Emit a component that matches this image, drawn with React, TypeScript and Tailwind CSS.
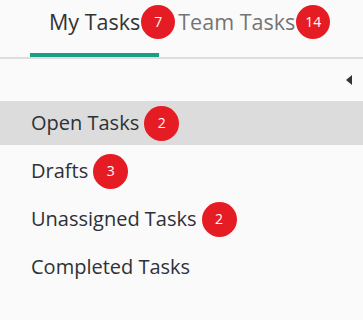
const tabs = [
  { label: "My Tasks", count: 7, active: true },
  { label: "Team Tasks", count: 14, active: false },
];

const items = [
  { label: "Open Tasks", count: 2, selected: true },
  { label: "Drafts", count: 3 },
  { label: "Unassigned Tasks", count: 2 },
  { label: "Completed Tasks" },
];

const Badge = ({ value, className }: { value: number; className?: string }) => (
  <span
    className={`flex items-center justify-center rounded-full bg-[#e61c24] text-white text-[14px] font-normal leading-none ${className ?? ""}`}
  >
    {value}
  </span>
);

export default function App() {
  return (
    <div
      className="w-[363px] h-[320px] bg-[#fafafa] overflow-hidden"
      style={{ fontFamily: '"Open Sans", "Noto Sans", sans-serif' }}
    >
      <div className="border-b-2 border-[#dddddd] pl-[30px] flex h-[59px]">
        {tabs.map((tab) => (
          <div
            key={tab.label}
            className={`relative px-[19px] flex items-start pt-[7px] text-[21.5px] font-medium leading-[30px] ${
              tab.active
                ? "text-[#333333] border-b-[4px] border-[#1a9e85]"
                : "text-[#747474]"
            }`}
          >
            {tab.label}
            <Badge
              value={tab.count}
              className="absolute top-[5px] -right-[16px] w-[34px] h-[34px]"
            />
          </div>
        ))}
      </div>

      <div className="h-[42px] flex items-center justify-end pr-[11px]">
        <svg width="6" height="10" viewBox="0 0 6 10">
          <path d="M6 0 L0 5 L6 10 Z" fill="#333333" />
        </svg>
      </div>

      <ul className="flex flex-col gap-[4px]">
        {items.map((item) => (
          <li
            key={item.label}
            className={`h-[44px] flex items-center pl-[31px] text-[20px] font-medium text-[#2e3136] ${
              item.selected ? "bg-[#dcdcdc]" : ""
            }`}
          >
            <span className="leading-none">{item.label}</span>
            {item.count !== undefined && (
              <Badge value={item.count} className="ml-[5px] w-[35px] h-[35px]" />
            )}
          </li>
        ))}
      </ul>
    </div>
  );
}
